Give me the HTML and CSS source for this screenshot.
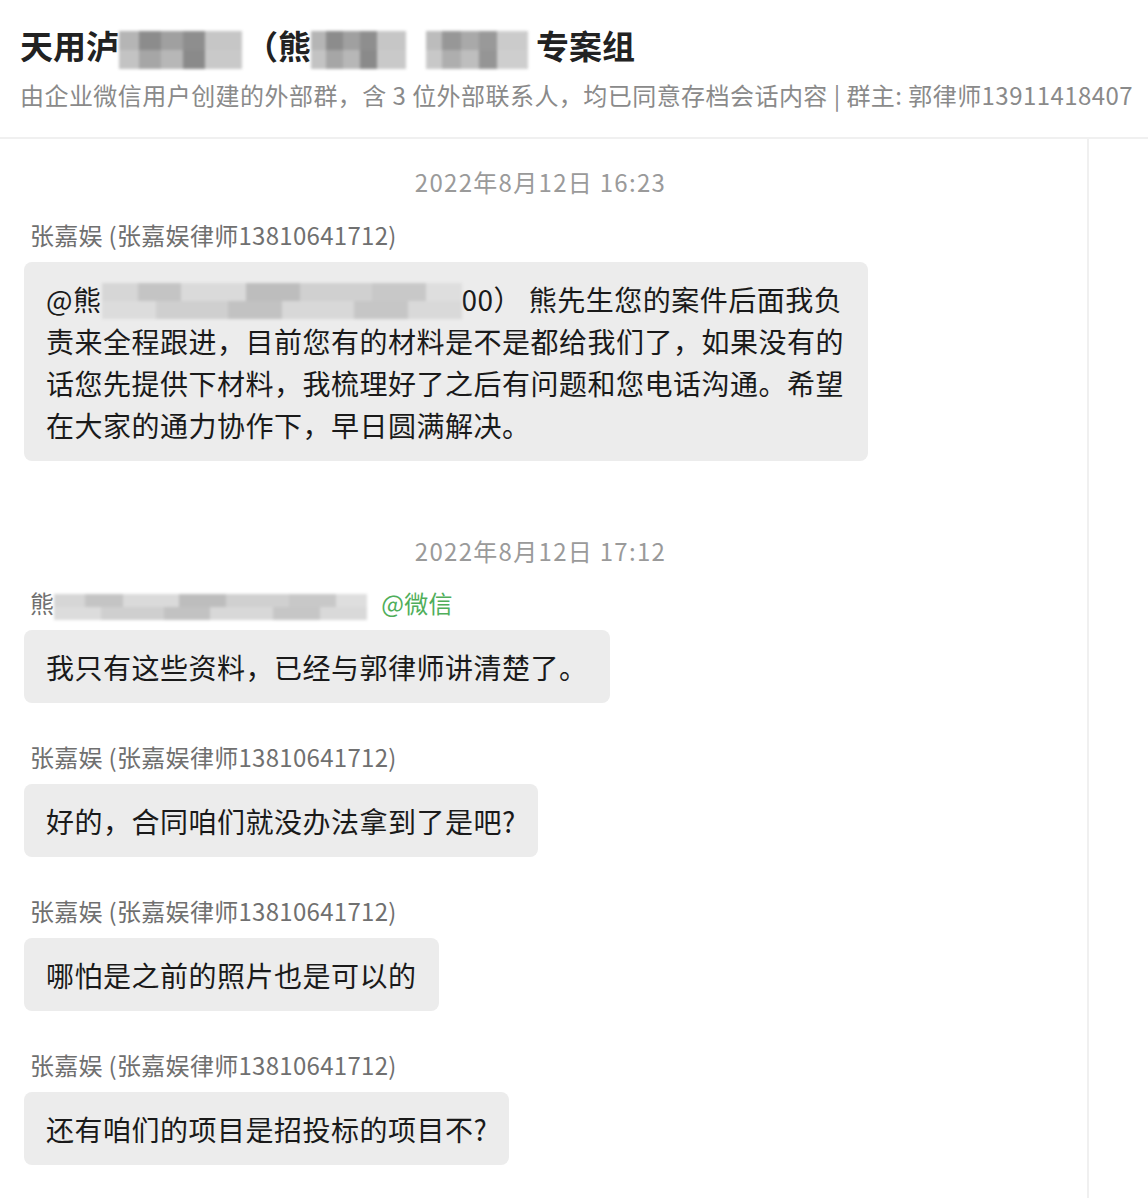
FILE: index.html
```html
<!DOCTYPE html>
<html>
    <head>
        <meta charset="UTF-8">
        <meta name="viewport" content="width=device-width, initial-scale=1.0">
        <link rel="stylesheet" href="styles.css">
    </head>
    <body>

        <div class="header">
            <div class="title">天用泸<span class="mosaic mosaic-dark m-t1"></span>（熊<span class="mosaic mosaic-dark m-t2"></span><span class="mosaic mosaic-dark m-t3"></span>专案组</div>
            <div class="subtitle">由企业微信用户创建的外部群，含 3 位外部联系人，均已同意存档会话内容 | 群主: 郭律师13911418407</div>
        </div>

        <div class="main">
            <div class="chat">

                <div class="time">2022年8月12日 16:23</div>

                <div class="msg">
                    <div class="name">张嘉娱 (张嘉娱律师13810641712)</div>
                    <div class="bubble">@熊<span class="mosaic mosaic-light m-b1"></span>00） 熊先生您的案件后面我负责来全程跟进，目前您有的材料是不是都给我们了，如果没有的话您先提供下材料，我梳理好了之后有问题和您电话沟通。希望在大家的通力协作下，早日圆满解决。</div>
                </div>

                <div class="time gap">2022年8月12日 17:12</div>

                <div class="msg">
                    <div class="name">熊<span class="mosaic mosaic-light m-n1"></span><span class="tag">@微信</span></div>
                    <div class="bubble">我只有这些资料，已经与郭律师讲清楚了。</div>
                </div>

                <div class="msg">
                    <div class="name">张嘉娱 (张嘉娱律师13810641712)</div>
                    <div class="bubble">好的，合同咱们就没办法拿到了是吧?</div>
                </div>

                <div class="msg">
                    <div class="name">张嘉娱 (张嘉娱律师13810641712)</div>
                    <div class="bubble">哪怕是之前的照片也是可以的</div>
                </div>

                <div class="msg">
                    <div class="name">张嘉娱 (张嘉娱律师13810641712)</div>
                    <div class="bubble">还有咱们的项目是招投标的项目不?</div>
                </div>

            </div>
            <div class="side"></div>
        </div>

    </body>
</html>
```

FILE: styles.css
```css
body {
    margin: 0;
    font-family: "Noto Sans CJK SC", "Noto Sans", sans-serif;
    color: #1a1a1a;
    background: #fff;
}

.header {
    padding: 23px 20px 25px 20px;
    border-bottom: 2px solid #f0f0f0;
}
.title {
    font-size: 33px;
    line-height: 44px;
    font-weight: 700;
    color: #222;
    white-space: nowrap;
}
.subtitle {
    margin-top: 9px;
    font-size: 24px;
    line-height: 34px;
    letter-spacing: 0.45px;
    color: #8a8a8a;
    white-space: nowrap;
}

.main {
    display: flex;
    min-height: 1060px;
}
.chat {
    width: 1063px;
    padding: 26px 0 0 24px;
    border-right: 2px solid #f0f0f0;
}
.side {
    flex: 1;
}

.time {
    font-size: 24px;
    line-height: 34px;
    letter-spacing: 1.3px;
    color: #9a9a9a;
    text-align: center;
    margin-bottom: 19px;
    padding-right: 30px;
}
.time.gap {
    margin-top: 73px;
    margin-bottom: 18px;
}

.msg {
    margin-bottom: 37px;
}
.name {
    padding-left: 6px;
    font-size: 24px;
    line-height: 34px;
    letter-spacing: 0.3px;
    color: #707070;
    white-space: nowrap;
}
.tag {
    margin-left: 14px;
    color: #4fae5a;
}
.bubble {
    display: inline-block;
    max-width: 800px;
    margin-top: 10px;
    padding: 16px 22px 15px 22px;
    background: #ececec;
    border-radius: 8px;
    font-size: 28px;
    line-height: 42px;
    letter-spacing: 0.5px;
    color: #1a1a1a;
}

/* blurred (redacted) areas */
.mosaic {
    display: inline-block;
    vertical-align: middle;
    filter: blur(1.5px);
}
.mosaic-dark {
    background:
        linear-gradient(90deg, #b5b5b5 0 16%, #8c8c8c 16% 34%, #a0a0a0 34% 52%, #8e8e8e 52% 70%, #c6c6c6 70%) top / 100% 50% no-repeat,
        linear-gradient(90deg, #c3c3c3 0 16%, #a6a6a6 16% 34%, #b7b7b7 34% 52%, #8a8a8a 52% 70%, #c9c9c9 70%) bottom / 100% 50% no-repeat;
}
.mosaic-light {
    background:
        linear-gradient(90deg, #d6d6d6 0 10%, #c4c4c4 10% 22%, #dadada 22% 40%, #bdbdbd 40% 55%, #d0d0d0 55% 75%, #c8c8c8 75% 90%, #dedede 90%) top / 100% 50% no-repeat,
        linear-gradient(90deg, #dcdcdc 0 15%, #cfcfcf 15% 35%, #c2c2c2 35% 50%, #d8d8d8 50% 70%, #c6c6c6 70% 85%, #d9d9d9 85%) bottom / 100% 50% no-repeat;
}
.m-t1 {
    width: 123px;
    height: 38px;
    margin-right: 3px;
}
.m-t2 {
    width: 95px;
    height: 38px;
    margin-right: 20px;
}
.m-t3 {
    width: 102px;
    height: 38px;
    margin-right: 8px;
    opacity: 0.9;
}
.m-b1 {
    width: 360px;
    height: 36px;
    margin-top: -4px;
}
.m-n1 {
    width: 313px;
    height: 26px;
}
```
